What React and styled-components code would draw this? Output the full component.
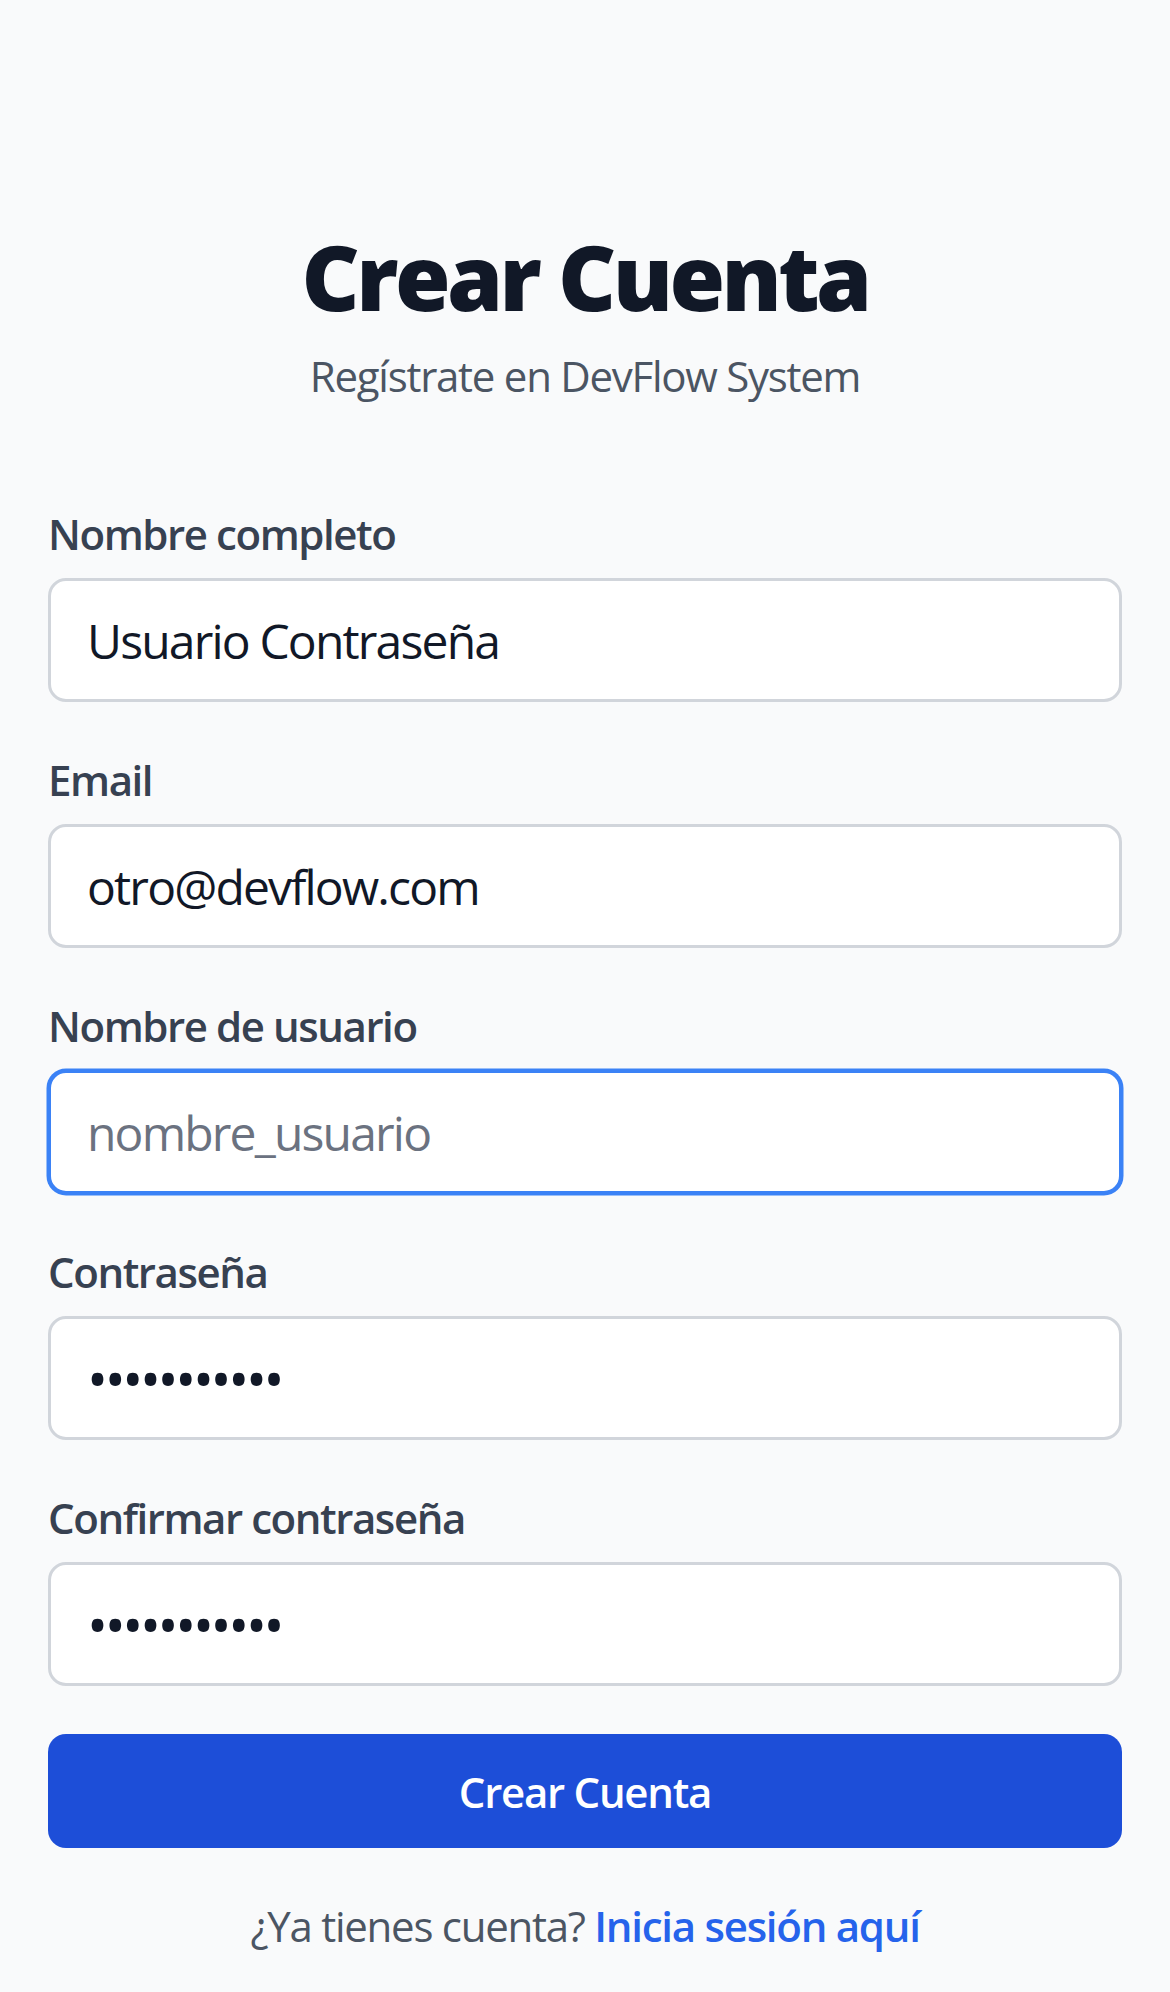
import React from 'react';
import styled, { createGlobalStyle } from 'styled-components';

const GlobalStyle = createGlobalStyle`
	* {
		box-sizing: border-box;
	}
	body {
		margin: 0;
		background: #f9fafb;
		font-family: 'Open Sans', 'Noto Sans', sans-serif;
		-webkit-font-smoothing: antialiased;
	}
`;

const fields = [
	{ id: 'name', label: 'Nombre completo', type: 'text', value: 'Usuario Contraseña' },
	{ id: 'email', label: 'Email', type: 'email', value: 'otro@devflow.com' },
	{ id: 'username', label: 'Nombre de usuario', type: 'text', placeholder: 'nombre_usuario', focused: true },
	{ id: 'password', label: 'Contraseña', type: 'password', value: 'contraseña1' },
	{ id: 'confirm', label: 'Confirmar contraseña', type: 'password', value: 'contraseña1' },
];

const App = () => {
	return (
		<>
			<GlobalStyle />
			<Page>
				<Header>
					<Title>Crear Cuenta</Title>
					<Subtitle>Regístrate en DevFlow System</Subtitle>
				</Header>
				<Form onSubmit={(e) => e.preventDefault()}>
					{fields.map((f) => (
						<Field key={f.id}>
							<Label htmlFor={f.id}>{f.label}</Label>
							<Input
								id={f.id}
								type={f.type}
								defaultValue={f.value}
								placeholder={f.placeholder}
								$focused={f.focused}
							/>
						</Field>
					))}
					<SubmitButton type='submit'>Crear Cuenta</SubmitButton>
					<Footer>
						¿Ya tienes cuenta? <FooterLink href='#'>Inicia sesión aquí</FooterLink>
					</Footer>
				</Form>
			</Page>
		</>
	);
};

const Page = styled.main`
	min-height: 100vh;
	padding: 222px 48px 36px;
`;

const Header = styled.header`
	display: flex;
	flex-direction: column;
	align-items: center;
	gap: 16px;
`;

const Title = styled.h1`
	margin: 0;
	font-size: 90px;
	line-height: 108px;
	font-weight: 800;
	letter-spacing: -0.04em;
	color: #111827;
`;

const Subtitle = styled.p`
	margin: 0;
	font-size: 42px;
	line-height: 60px;
	letter-spacing: -0.03em;
	color: #4b5563;
`;

const Form = styled.form`
	display: flex;
	flex-direction: column;
	gap: 48px;
	margin-top: 98px;
`;

const Field = styled.div`
	display: flex;
	flex-direction: column;
	gap: 14px;
`;

const Label = styled.label`
	font-size: 42px;
	line-height: 60px;
	font-weight: 600;
	letter-spacing: -0.034em;
	color: #374151;
`;

const Input = styled.input`
	width: 100%;
	height: 124px;
	padding: 0 36px;
	border: 3px solid ${(p) => (p.$focused ? '#3b82f6' : '#d1d5db')};
	box-shadow: ${(p) => (p.$focused ? '0 0 0 1.5px #3b82f6' : 'none')};
	border-radius: 18px;
	background: #fff;
	font-family: inherit;
	font-size: 48px;
	letter-spacing: -0.038em;
	color: #111827;
	outline: none;

	&::placeholder {
		color: #6b7280;
	}

	&[type='password'] {
		font-size: 56px;
		letter-spacing: -3.4px;
	}
`;

const SubmitButton = styled.button`
	width: 100%;
	height: 114px;
	border: none;
	border-radius: 18px;
	background: #1d4ed8;
	color: #fff;
	font-family: inherit;
	font-size: 42px;
	font-weight: 600;
	letter-spacing: -0.03em;
	cursor: pointer;
`;

const Footer = styled.p`
	margin: 0;
	text-align: center;
	font-size: 42px;
	line-height: 60px;
	letter-spacing: -0.03em;
	color: #4b5563;
`;

const FooterLink = styled.a`
	color: #2563eb;
	font-weight: 600;
	text-decoration: none;
`;

export default App;
